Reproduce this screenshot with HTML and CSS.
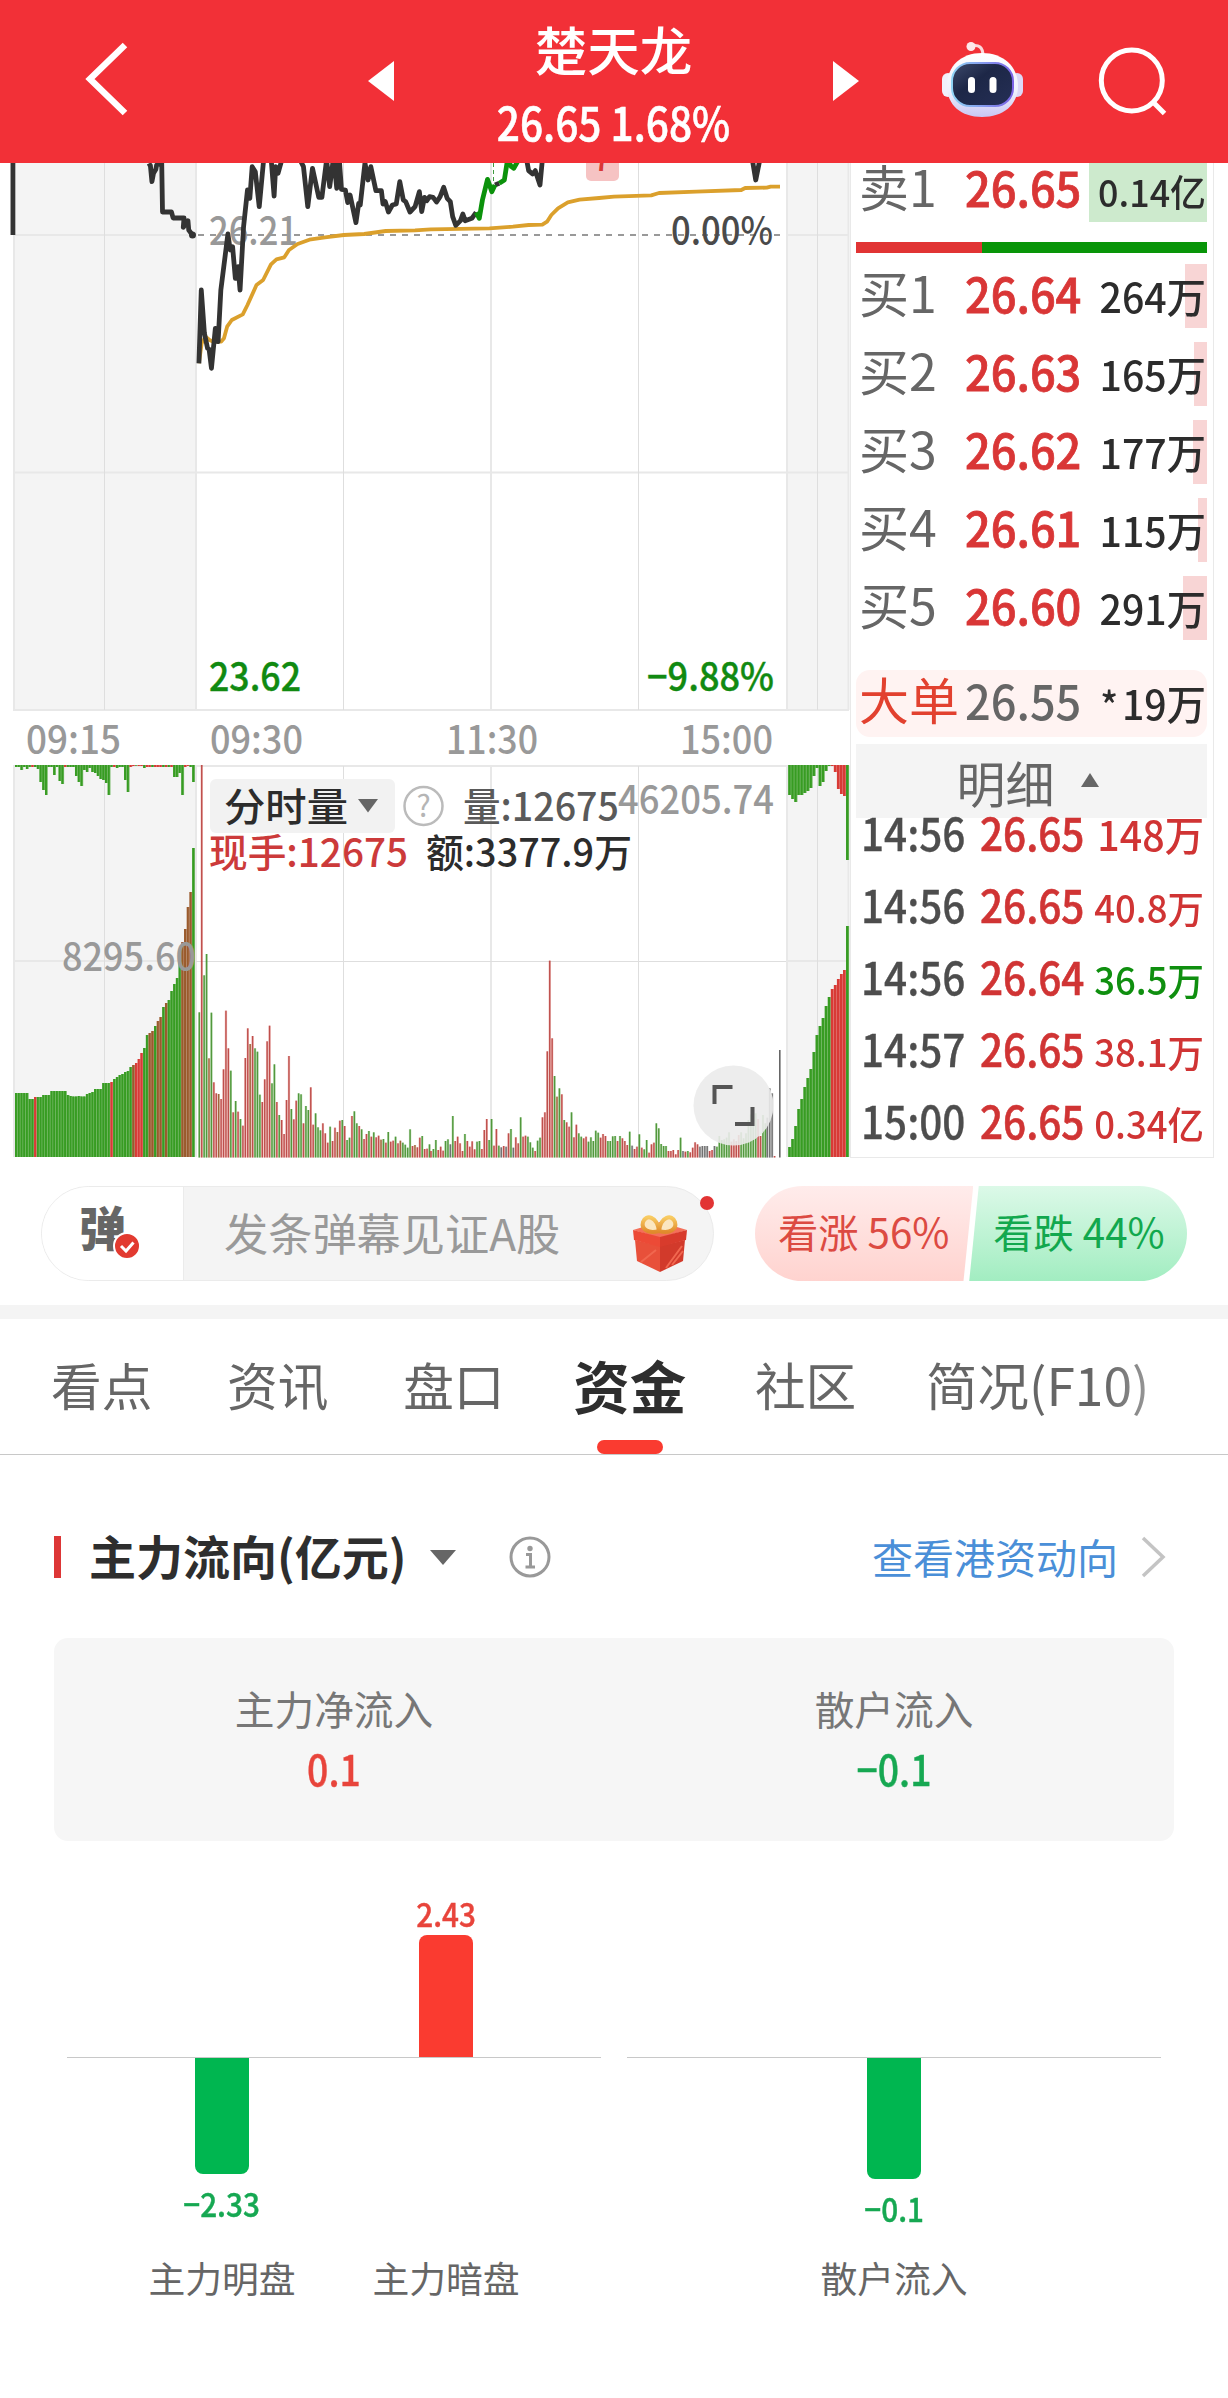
FILE: index.html
```html
<!DOCTYPE html>
<html lang="zh-CN">
<head>
<meta charset="utf-8">
<title>楚天龙 26.65 1.68%</title>
<link rel="stylesheet" href="styles.css">
</head>
<body>
<header class="topbar">
  <svg class="back" width="44" height="76" viewBox="84 41 44 76"><path d="M125 45 90 79 125 113" fill="none" stroke="#fff" stroke-width="6.5"/></svg>
  <svg class="prev" width="26" height="40" viewBox="0 0 26 40"><path d="M26 0V40L0 20Z" fill="#fff"/></svg>
  <div class="stock">
    <div class="stock-name">楚天龙</div>
    <div class="stock-quote">26.65 1.68%</div>
  </div>
  <svg class="next" width="26" height="40" viewBox="0 0 26 40"><path d="M0 0V40L26 20Z" fill="#fff"/></svg>
  <svg class="robot" width="84" height="80" viewBox="940 40 84 80">
    <defs>
      <linearGradient id="shell" x1="0" y1="0" x2="0" y2="1"><stop offset="0" stop-color="#fff"/><stop offset=".6" stop-color="#eef0fc"/><stop offset="1" stop-color="#c9c6f3"/></linearGradient>
      <linearGradient id="visor" x1="0" y1="0" x2="1" y2="1"><stop offset="0" stop-color="#3d4a6b"/><stop offset=".4" stop-color="#1d2747"/><stop offset="1" stop-color="#252f56"/></linearGradient>
      <linearGradient id="rim" x1="0" y1="0" x2="1" y2="0"><stop offset="0" stop-color="#8fd4f5"/><stop offset="1" stop-color="#7b62e6"/></linearGradient>
    </defs>
    <path d="M971 46Q983 43 983 56" fill="none" stroke="#fbd9dc" stroke-width="3"/>
    <circle cx="971" cy="46.500" r="4.500" fill="#fde8ea"/>
    <rect x="942" y="73" width="12" height="24" rx="6" fill="#f1f0fb"/>
    <rect x="1011" y="73" width="12" height="24" rx="6" fill="#dcd8f7"/>
    <path d="M982 53C1003 53 1018 66 1018 86C1018 105 1003 117 982 117C961 117 947 105 947 86C947 66 961 53 982 53Z" fill="url(#shell)"/>
    <rect x="952" y="63" width="61" height="43" rx="18" fill="url(#visor)" stroke="url(#rim)" stroke-width="2"/>
    <rect x="968" y="77" width="7" height="16" rx="3.500" fill="#fff"/>
    <rect x="989.500" y="77" width="7" height="16" rx="3.500" fill="#fff"/>
  </svg>
  <svg class="search" width="72" height="76" viewBox="1098 44 72 76"><circle cx="1131.800" cy="80.500" r="30.500" fill="none" stroke="#fff" stroke-width="5"/><path d="M1153 102 1164.500 113.500" stroke="#fff" stroke-width="5"/></svg>
</header>

<main>
  <section class="quote">
    <svg class="chart" width="850" height="995" viewBox="0 163 850 995">
      <g fill="#f4f4f4">
        <rect x="13" y="163" width="184" height="548"/><rect x="786" y="163" width="63" height="548"/>
        <rect x="13" y="765" width="184" height="392"/><rect x="786" y="765" width="63" height="392"/>
      </g>
      <g fill="none" stroke="#e8e8e8" stroke-width="2">
        <path d="M14 163V710M196 163V710M491 163V710M787 163V710M848.500 163V710M13 472.500H849M13 710H849M13 235H196M786 235H849"/>
        <path d="M14 766V1157M196 766V1157M491 766V1157M787 766V1157M848.500 766V1157M13 766H849M13 961H196M786 961H849"/>
      </g>
      <path d="M104.500 163V710M343.500 163V710M638.500 163V710M817.500 163V710M104.500 766V1157M343.500 766V1157M638.500 766V1157M817.500 766V1157M196 961.500H786" fill="none" stroke="#dedede"/>
      <path d="M198 235H786" stroke="#999" stroke-width="2" stroke-dasharray="6 6"/>
      <path d="M493.500 163V184" stroke="#3f9a3f" stroke-dasharray="4 3"/>
      <text class="num mid" x="209" y="245" textLength="89" lengthAdjust="spacingAndGlyphs">26.21</text>
      <rect x="586" y="150" width="33" height="31" rx="5" fill="#f6c3c3"/>
      <text x="593" y="171" font-size="32" font-weight="500" fill="#d93636">7</text>
      <g transform="scale(.39158 .33333)">
        <g class="line">
          <path class="avg" d="M508 1090 515 1030 525 1010 535 1020 545 1025 565 1025 572 1015 580 980 592 960 620 943 632 915 655 855 672 840 692 793 706 778 726 772 738 750 760 732 790 719 830 712 878 705 930 702 985 693 1060 691 1100 688 1250 685 1310 680 1350 675 1385 674 1397 665 1408 645 1425 625 1450 607 1480 599 1530 594 1568 590 1663 586 1683 579 1778 575 1893 570 1903 564 1958 563 1968 560 1992 560"/>
          <path d="M33 480V705"/>
          <path d="M378 500 384 496 388 545 392 520 398 508 400 495 413 489 415 636 438 636 442 654 470 654 468 682 480 662 482 690 492 706"/>
          <path d="M508 1090 514 870 522 1000 530 1045 534 1048 540 1105 550 985 557 1025 564 870 582 702 588 750 594 740 601 835 608 800 613 870 622 680 632 570 638 595 644 500 652 515 662 620 674 470M692 470 700 588 704 500 710 520 722 470M762 470 775 500 786 620 798 505 814 592 822 592 834 480 842 560 852 470 860 565 866 470 872 568 882 570 888 608 894 585 909 668 916 610 920 615 932 489 940 540 947 500 960 572 974 572 978 612 984 605 992 636 1002 615 1012 612 1021 545 1030 600 1036 605 1047 636 1060 620 1071 575 1077 635 1084 592 1090 602 1097 590 1106 592 1115 606 1124 590 1133 562 1142 595 1150 605 1156 650 1164 676 1176 662 1182 642 1188 662 1205 655 1216 637"/>
          <path d="M1264 555 1275 550M1345 480 1350 512 1360 522 1367 512 1379 555 1385 480M1920 470 1930 540 1942 470"/>
          <path class="up" d="M1216 637 1224 655 1232 600 1245 538 1256 575 1264 555M1275 550 1288 540 1296 480 1306 500 1312 505 1324 480"/>
        </g>
      </g>
      <circle cx="192.500" cy="235" r="3.500" fill="#333"/>
      <text class="num dark" x="671" y="245" textLength="102" lengthAdjust="spacingAndGlyphs">0.00%</text>
      <text class="num green" x="209" y="691" textLength="92" lengthAdjust="spacingAndGlyphs">23.62</text>
      <text class="num green" x="647" y="691" textLength="127" lengthAdjust="spacingAndGlyphs">−9.88%</text>
      <text class="num gray" x="26" y="754" textLength="95" lengthAdjust="spacingAndGlyphs">09:15</text>
      <text class="num gray" x="210" y="754" textLength="93" lengthAdjust="spacingAndGlyphs">09:30</text>
      <text class="num gray" x="446" y="754" textLength="92" lengthAdjust="spacingAndGlyphs">11:30</text>
      <text class="num gray" x="680" y="754" textLength="93" lengthAdjust="spacingAndGlyphs">15:00</text>

      <g id="volume"></g>

      <text class="num mid" x="62" y="970.500" textLength="134" lengthAdjust="spacingAndGlyphs">8295.60</text>
      <rect x="210" y="779" width="185" height="54" rx="6" fill="#f2f2f2"/>
      <text class="num ink" x="224" y="821" textLength="124" lengthAdjust="spacingAndGlyphs">分时量</text>
      <path d="M358 799H378L368 812.500Z" fill="#666"/>
      <circle cx="423.500" cy="806" r="19" fill="#fff" stroke="#bbb" stroke-width="2.500"/>
      <text x="423.500" y="817" font-size="30" fill="#b5b5b5" text-anchor="middle">?</text>
      <text class="num soft" x="463" y="820.500" textLength="156" lengthAdjust="spacingAndGlyphs">量:12675</text>
      <text class="num gray" x="618" y="813.500" textLength="156" lengthAdjust="spacingAndGlyphs">46205.74</text>
      <text class="num red" x="209" y="866.500" textLength="199" lengthAdjust="spacingAndGlyphs">现手:12675</text>
      <text class="num ink" x="426" y="866.500" textLength="206" lengthAdjust="spacingAndGlyphs">额:3377.9万</text>
      <circle cx="733.500" cy="1105.500" r="40" fill="#ebebeb" fill-opacity=".9"/>
      <path d="M714.500 1104V1087H732.500M735 1124H752.500V1107" fill="none" stroke="#555" stroke-width="4"/>
    </svg>

    <aside class="book">
      <div class="level ask" style="--depth:118px"><span>卖1</span><b>26.65</b><i class="small">0.14亿</i></div>
      <div class="ratio"><span style="width:126px"></span></div>
      <div class="level" style="--depth:22px"><span>买1</span><b>26.64</b><i>264万</i></div>
      <div class="level" style="--depth:13px"><span>买2</span><b>26.63</b><i>165万</i></div>
      <div class="level" style="--depth:14px"><span>买3</span><b>26.62</b><i>177万</i></div>
      <div class="level" style="--depth:9px"><span>买4</span><b>26.61</b><i>115万</i></div>
      <div class="level" style="--depth:24px"><span>买5</span><b>26.60</b><i>291万</i></div>
      <div class="level big"><span>大单</span><b>26.55</b><i><small>*</small>19万</i></div>
      <div class="detail-head">明细<svg width="18" height="14" viewBox="0 0 18 14"><path d="M9 0 18 14H0Z" fill="#666"/></svg></div>
      <div class="trade"><span>14:56</span><b>26.65</b><i class="large">148万</i></div>
      <div class="trade"><span>14:56</span><b>26.65</b><i>40.8万</i></div>
      <div class="trade"><span>14:56</span><b>26.64</b><i class="down">36.5万</i></div>
      <div class="trade"><span>14:57</span><b>26.65</b><i>38.1万</i></div>
      <div class="trade"><span>15:00</span><b>26.65</b><i>0.34亿</i></div>
    </aside>
  </section>

  <section class="social">
    <div class="danmu">
      <div class="danmu-switch">弹<svg width="28" height="28" viewBox="0 0 28 28"><circle cx="14" cy="14" r="13" fill="#e23a30" stroke="#fff" stroke-width="2"/><path d="M8 14 13 19 20.500 10.500" fill="none" stroke="#fff" stroke-width="3"/></svg></div>
      <div class="danmu-input">发条弹幕见证A股</div>
      <svg class="gift" width="56" height="60" viewBox="632 1213 56 60">
        <defs><linearGradient id="bow" x1="0" y1="0" x2="0" y2="1"><stop offset="0" stop-color="#f8cb62"/><stop offset="1" stop-color="#e08a2c"/></linearGradient></defs>
        <path d="M635 1240 660 1246V1272L637 1261Z" fill="#e8503a"/>
        <path d="M685 1240 660 1246V1272L683 1261Z" fill="#d23a2b"/>
        <path d="M633 1230 660 1222 687 1230 660 1238Z" fill="#f4705a"/>
        <path d="M633 1230 660 1237V1247L634 1240Z" fill="#ec4a36"/>
        <path d="M687 1230 660 1237V1247L686 1240Z" fill="#d83b2c"/>
        <path d="M666 1268 682 1246M672 1265 683 1251M641 1262 656 1250" stroke="#f1674f" stroke-width="2"/>
        <path d="M659 1231C648 1234 641 1229 643 1222C646 1214 657 1216 659 1231ZM659 1231C670 1234 677 1229 675 1222C672 1214 661 1216 659 1231Z" fill="#fbe6c0" stroke="url(#bow)" stroke-width="4"/>
      </svg>
      <span class="dot"></span>
    </div>
    <div class="vote">
      <div class="bull">看涨 56%</div>
      <div class="bear">看跌 44%</div>
    </div>
  </section>

  <nav class="tabs">
    <span>看点</span><span>资讯</span><span>盘口</span><span class="active">资金</span><span>社区</span><span class="fade">简况(F10)</span>
  </nav>

  <section class="flow">
    <div class="flow-head">
      <h2>主力流向(亿元)</h2>
      <svg class="caret" width="26" height="15" viewBox="0 0 26 15"><path d="M0 0H26L13 15Z" fill="#666"/></svg>
      <svg class="info" width="42" height="42" viewBox="0 0 42 42"><circle cx="21" cy="21" r="19" fill="none" stroke="#999" stroke-width="3"/><circle cx="21" cy="12.500" r="2.700" fill="#999"/><path d="M17 18.500H21.500V30.500M16.500 31H26" fill="none" stroke="#999" stroke-width="3"/></svg>
      <a>查看港资动向</a>
      <svg class="go" width="26" height="42" viewBox="0 0 26 42"><path d="M2 2 22 21 2 40" fill="none" stroke="#c4c4c4" stroke-width="3.500"/></svg>
    </div>
    <div class="summary">
      <div><span>主力净流入</span><strong class="rise">0.1</strong></div>
      <div><span>散户流入</span><strong class="fall">−0.1</strong></div>
    </div>
    <div class="bars">
      <div class="group">
        <div class="above"><div class="col"></div><div class="col rise"><em>2.43</em><span class="bar" style="height:122px"></span></div></div>
        <div class="below"><div class="col fall"><span class="bar" style="height:116px"></span><em>−2.33</em></div><div class="col"></div></div>
        <div class="names"><div class="col">主力明盘</div><div class="col">主力暗盘</div></div>
      </div>
      <div class="group">
        <div class="above"></div>
        <div class="below"><div class="col fall"><span class="bar" style="height:121px"></span><em>−0.1</em></div></div>
        <div class="names"><div class="col">散户流入</div></div>
      </div>
    </div>
  </section>
</main>
<script src="chart.js"></script>
</body>
</html>
```

FILE: styles.css
```css
* { box-sizing: border-box; }
body {
  margin: 0;
  width: 1228px;
  height: 2398px;
  overflow: hidden;
  background: #fff;
  color: #333;
  font-family: "Noto Sans CJK SC", "Noto Sans", sans-serif;
}
svg { display: block; flex: none; }
i, em { font-style: normal; }

/* top bar */
.topbar {
  height: 163px;
  background: #f23037;
  color: #fff;
  display: flex;
  align-items: flex-start;
}
.back { margin: 41px 0 0 84px; }
.prev { margin: 61px 0 0 240px; }
.stock { width: 439px; padding-top: 18px; text-align: center; font-weight: 500; }
.stock-name { font-size: 52.5px; line-height: 60px; margin-bottom: 13px; }
.stock-quote { font-size: 46.5px; line-height: 60px; transform: scaleX(.873); -webkit-text-stroke: .6px; }
.next { margin-top: 61px; }
.robot { margin: 40px 0 0 81px; }
.search { margin: 44px 0 0 74px; }

/* intraday chart */
.quote { display: flex; height: 995px; }
.num { font-size: 39px; font-weight: 500; }
.num.mid, .num.gray { fill: #999; }
.num.dark { fill: #4a4a4a; }
.num.green { fill: #118a11; stroke: #118a11; stroke-width: .4px; }
.num.ink { fill: #2c2c2c; }
.num.soft { fill: #5a5a5a; }
.num.red { fill: #cc3a3a; }
.line path {
  fill: none;
  stroke: #333;
  stroke-width: 4.8px;
  stroke-linejoin: round;
  vector-effect: non-scaling-stroke;
}
.line .avg { stroke: #dba02c; stroke-width: 3.8px; }
.line .up { stroke: #0b920b; }

/* order book */
.book {
  width: 364px;
  padding: 0 6px 0 5px;
  border: solid #e9e9e9;
  border-width: 0 1px 1px 1px;
  overflow: hidden;
}
.level {
  display: grid;
  grid-template-columns: 105px 120px 1fr;
  align-items: baseline;
  height: 64px;
  margin-bottom: 14px;
  padding: 0 1px 0 4px;
  line-height: 54px;
  background: linear-gradient(#f8d5d5, #f8d5d5) right / var(--depth) 100% no-repeat;
}
.level span { font-size: 50px; color: #666; margin-left: -1px; }
.level b { font-size: 48px; font-weight: 500; color: #d93636; transform: scaleX(.94); transform-origin: 0 0; -webkit-text-stroke: .8px; }
.level i {
  font-size: 40.5px;
  font-weight: 500;
  color: #2c2c2c;
  text-align: right;
  white-space: nowrap;
  margin-left: -30px;
  transform: scaleX(.97);
  transform-origin: 100% 0;
}
.level i.small { font-size: 37px; }
.level.ask {
  margin: -5px 0 20px;
  background-image: linear-gradient(#cdeacd, #cdeacd);
}
.ratio { height: 11px; margin-bottom: 11px; background: #089508; }
.ratio span { display: block; height: 11px; background: #e13434; }
.level.big {
  height: 67px;
  margin: 30px 0 7px;
  line-height: 56px;
  border-radius: 14px;
  background: #fff3f2;
}
.level.big span { color: #e2412f; }
.level.big b { color: #666; -webkit-text-stroke: 0; }
.level.big small { font-size: 38px; margin-right: 4px; }
.detail-head {
  display: flex;
  justify-content: center;
  align-items: center;
  gap: 26px;
  height: 74px;
  padding: 0 8px 0 0;
  background: #f4f4f4;
  color: #666;
  font-size: 49px;
  line-height: 67px;
}
.detail-head svg { margin-top: -3px; }
.trade {
  display: grid;
  grid-template-columns: 119px 99px 1fr;
  align-items: baseline;
  height: 72px;
  padding: 0 3px 0 5px;
  line-height: 27px;
  color: #d03434;
  font-weight: 500;
}
.trade span, .trade b { transform: scaleX(.9); transform-origin: 0 0; white-space: nowrap; -webkit-text-stroke: .6px; }
.trade span { font-size: 45px; color: #4d4d4d; -webkit-text-stroke: .3px; }
.trade b { font-size: 45px; font-weight: 500; }
.trade i {
  font-size: 38px;
  text-align: right;
  white-space: nowrap;
  margin-left: -20px;
  transform: scaleX(.96);
  transform-origin: 100% 0;
}
.trade i.large { font-size: 41px; }
.trade i.down { color: #0f8f0f; }

/* comment bar and vote */
.social {
  display: flex;
  gap: 42px;
  height: 147px;
  padding: 28px 0 0 41px;
}
.danmu {
  position: relative;
  display: flex;
  width: 673px;
  height: 95px;
  border: 1px solid #ebebeb;
  border-radius: 48px;
  background: #f4f4f4;
}
.danmu-switch {
  position: relative;
  width: 142px;
  padding-left: 37px;
  border-right: 1px solid #ebebeb;
  border-radius: 47px 0 0 47px;
  background: #fff;
  color: #666;
  font-size: 47px;
  font-weight: 900;
  line-height: 78px;
}
.danmu-switch svg { position: absolute; left: 71px; top: 45px; }
.danmu-input { width: 448px; padding-left: 40px; color: #999; font-size: 44.2px; line-height: 91px; }
.gift { margin-top: 26px; }
.dot {
  position: absolute;
  right: -1px;
  top: 9px;
  width: 14px;
  height: 14px;
  border-radius: 50%;
  background: #e23434;
}
.vote { display: flex; width: 432px; height: 95px; margin-left: -1px; border-radius: 48px; overflow: hidden; font-size: 40.3px; line-height: 90px; }
.bull {
  width: 218.5px;
  padding-left: 23px;
  color: #dc4a42;
  background: linear-gradient(#ffeceb, #ffd3cf);
  clip-path: polygon(0 0, 100% 0, 208.5px 100%, 0 100%);
}
.bear {
  width: 218px;
  margin-left: -4px;
  padding-left: 24px;
  color: #12a84e;
  background: linear-gradient(#dcf9e8, #a2edc1);
  clip-path: polygon(9.5px 0, 100% 0, 100% 100%, 0 100%);
}

/* tabs */
.tabs {
  display: flex;
  gap: 74.7px;
  height: 150px;
  padding-left: 51px;
  border-top: 14px solid #f4f4f4;
  border-bottom: 1px solid #c8c8c8;
  color: #666;
  font-size: 50.7px;
  line-height: 130px;
  white-space: nowrap;
}
.active {
  display: flex;
  flex-direction: column;
  align-items: center;
  margin: 0 -6px;
  color: #2e2e2e;
  font-size: 56.5px;
  font-weight: 700;
  line-height: 131px;
}
.active::after { content: ""; width: 66px; height: 14px; margin-top: -10px; border-radius: 7px; background: #fa3b30; }
.fade { margin-left: -5px; font-size: 51.5px; background: linear-gradient(90deg, #666 80%, #999); background-clip: text; color: transparent; }

/* capital flow */
.flow { padding: 0 54px; }
.flow-head { display: flex; align-items: center; height: 42px; margin-top: 81px; }
h2 {
  margin: 0;
  padding-left: 28px;
  border-left: 7px solid #dd3636;
  color: #2e2e2e;
  font-size: 47px;
  font-weight: 700;
  line-height: 37px;
  height: 42px;
}
.caret { margin-left: 23px; }
.info { margin-left: 53px; }
.flow-head a { margin-left: auto; color: #4a8fd8; font-size: 41px; line-height: 38px; margin-top: -3px; }
.go { margin: 0 7px 0 23px; }
.summary {
  display: grid;
  grid-template-columns: 1fr 1fr;
  height: 203px;
  margin-top: 60px;
  padding-top: 43px;
  border-radius: 14px;
  background: #f6f6f6;
  text-align: center;
}
.summary span { display: block; color: #777; font-size: 39.7px; line-height: 54px; }
.summary strong { display: block; font-size: 42px; font-weight: 500; line-height: 66px; transform: scaleX(.89); -webkit-text-stroke: .4px; }
.rise { color: #e8443b; }
.fall { color: #16a852; }
.bars { display: flex; gap: 26px; padding: 0 13px; }
.group { width: 534px; }
.above, .below, .names { display: flex; justify-content: center; }
.above { height: 217px; align-items: flex-end; border-bottom: 1px solid #c8c8c8; }
.col {
  width: 224px;
  display: flex;
  flex-direction: column;
  align-items: center;
  font-size: 33px;
  font-weight: 500;
  line-height: 44px;
}
.col em { transform: scaleX(.9); -webkit-text-stroke: .4px; }
.bar { width: 54px; }
.rise .bar { background: #fa3b30; border-radius: 8px 8px 0 0; }
.fall .bar { background: #00b650; border-radius: 0 0 8px 8px; margin-bottom: 7px; }
.below { height: 197px; }
.names .col { color: #666; font-size: 36.8px; font-weight: 400; }
```

FILE: chart.js
```js
// Volume pane. Measures are in thirds of a pixel, the pane's own grid.
const NS = "http://www.w3.org/2000/svg";
const pane = document.getElementById("volume");
const COLORS = { g: "#379c22", r: "#d83a36", b: "#9a5a2c", k: "#666" };

function bar(x, y, w, h, fill, opacity) {
  const r = document.createElementNS(NS, "rect");
  r.setAttribute("x", x.toFixed(2));
  r.setAttribute("y", y.toFixed(2));
  r.setAttribute("width", w);
  r.setAttribute("height", Math.max(h, 0.6).toFixed(2));
  r.setAttribute("fill", fill);
  if (opacity) r.setAttribute("fill-opacity", opacity);
  pane.appendChild(r);
}
const parse = s => s.trim().split(/\s+/).map(t => {
  const m = t.match(/^([\d.]+)([a-z]?)$/);
  return [Number(m[1]), m[2] || "g"];
});

// Minute bars, given by the depth of their top edge.
function minutes(x0, data) {
  parse(data).forEach(([top, c], i) => {
    const x = x0 + i * 2.423, y = 750 + top / 3;
    bar(x - 1.2, y, 2.4, 1157.5 - y, COLORS[c], 0.3);
    bar(x - 0.7, y, 1.4, 1157.5 - y, c === "r" ? "#b8433f" : c === "g" ? "#46902f" : COLORS[c], 0.9);
  });
}
minutes(199.3, `787 45r 676 612 925b 788 997r 1030r 1032b 1047r 958r 782r 895r 962 1087r 1053 1085r 1107
1127r 924r 835r 882b 858r 895 905 1034 1056r 988r 874r 827r 1000 943 1056r 1095 1110r 1152r 1050r 918r
1077 1108r 1052r 1030 1033 1120r 1068 1080 1012r 1124r 1090 1132 1141 1120r 1150r 1178r 1130 1173r 1133r
1146b 1112r 1110 1128r 1170 1163 1098r 1084 1120 1128r 1138 1167r 1152r 1143 1160r 1147 1162r 1157r 1169b
1167 1178r 1146 1175r 1172r 1160 1180r 1172b 1178 1184 1193 1138 1188r 1185b 1192r 1163r 1158 1197r 1196r 1183`);
minutes(431, `1203r 1197 1170 1200r 1190r 1202r 1173 1168 1183k 1098 1173r 1160r 1180r 1203r 1152 1173r 1190r
1174r 1198r 1175 1173 1197r 1140r 1107r 1170 1107 1187r 1137r 1187 1192k 1188r 1190k 1150r 1137 1193k 1162r
1180r 1102 1160r 1157r 1160 1177 1193 1203r 1172 1163 1102r 1087r 904r 632r 865r 978 1040b 1015 1033r 1110
1117r 1130r 1087 1162r 1124r 1150 1160 1165r 1160r 1175 1162 1173 1142 1148 1163r 1152r 1158r 1173 1173 1159
1158 1173r 1158 1165r 1173r 1185r 1145 1187k 1197r 1190r 1153 1193r 1198 1170 1208r 1183r 1178r 1120 1135
1182 1188 1188 1203r 1203r 1200r 1213r 1200r 1163 1203k 1205r 1203 1207r 1193r 1177r 1183r 1190k 1188k 1188k
1188k 1203r 1200r 1188k 1190 1158 1170 1168 1163 1147 1175r 1168r 1173r 1155r 1147 1165 1150 1110 1093 1088
1090 1107r 1158r 1095 1120`);
minutes(767.3, "1103k 1015k 1030k 1218r");
bar(779, 1050, 1.6, 107.500, COLORS.k);

// Auction bars: standing from the foot and hanging from the top.
function auction(x0, step, up, down) {
  parse(up).forEach(([h, c], i) => {
    bar(x0 + i * step, 1157 - h, step, h, COLORS[c], 0.7);
    bar(x0 + i * step, 1157 - h, step - 0.8, h, COLORS[c]);
  });
  parse(down).forEach(([h, c], i) => {
    bar(x0 + i * step, 765, step, h, COLORS[c], 0.7);
    bar(x0 + i * step, 765, step - 0.8, h, COLORS[c]);
  });
}
auction(15, 2.727, `64 64 64 64 64 58 58 60r 60 60 62 62 62 66 66 66 66 66 66 62 61 60.5 60.5 61 60.5 60.5 63
64 65 68 68 68 74 74 74 75r 78 80 82 83 85 86 90 92b 94r 98r 104r 109 122 124b 126b 131 136b 140b 150 154b 157
166 173 179 197 215b 228b 250b 265b 309`,
`2 2 5 2 4 2 2r 2 4 17 25 30 2 2 10 2 16 19 2r 2 2 2 11 17 21 5 7 3 7 8 11 14 15 18 30 2 2r 3 2 2 15 27 2r 1r
0 1r 1r 3 2r 2r 2 2r 2r 2r 2 2r 2 2r 12 12 8 30 2r 1r 2 17`);
auction(788.3, 3.04, `10 18 31 48 58 70 79 88 105 122 131 139 151 160 168r 172r 178r 183r 187r 231`,
`30 34 37 30 30 28 26 23 11 3 21 17 6 1 1r 7r 24r 29r 31r 95`);
```
